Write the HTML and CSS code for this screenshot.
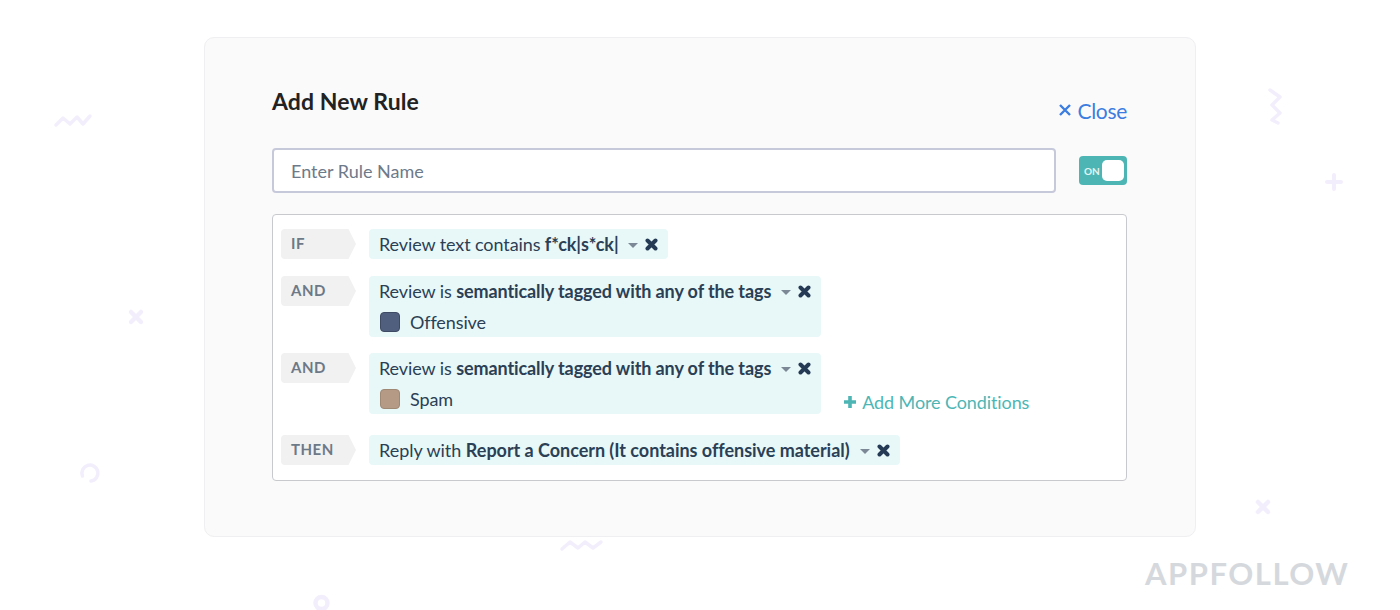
FILE: index.html
```html
<!DOCTYPE html>
<html lang="en">
<head>
    <meta charset="UTF-8">
    <title>Add New Rule</title>
    <link rel="stylesheet" href="styles.css">
</head>
<body>
    <svg class="deco" width="1400" height="610" viewBox="0 0 1400 610" fill="none">
        <g stroke="#f3eefc" stroke-width="3.500" stroke-linecap="round" stroke-linejoin="round">
            <path d="M56 125l7-7 7 6 7-7 6 7 7-8"/>
            <path d="M131 312l10 10M141 312l-10 10" stroke-width="4.500"/>
            <path d="M82.500 476a8 8 0 1 1 8.500 5"/>
            <path d="M562 549l8-7 8 6 7-6 8 6 8-6"/>
            <circle cx="321.500" cy="603" r="6" stroke-width="4.500"/>
            <path d="M1270 90l10 7-8 8 8 8-8 7 6 3"/>
            <path d="M1334 175v14M1327 182h14" stroke-width="4"/>
            <path d="M1258 502l10 10M1268 502l-10 10" stroke-width="4.500"/>
        </g>
    </svg>

    <div class="card">
        <div class="card-head">
            <h1>Add New Rule</h1>
            <a class="close">
                <svg width="12" height="12" viewBox="0 0 12 12"><path d="M1 1l10 10M11 1l-10 10" stroke="#3b7de0" stroke-width="2.400"/></svg>
                Close
            </a>
        </div>

        <div class="name-row">
            <input class="name-input" type="text" placeholder="Enter Rule Name">
            <div class="toggle">
                <span>ON</span>
                <i class="knob"></i>
            </div>
        </div>

        <div class="rules">
            <div class="rule">
                <div class="tag">IF</div>
                <div class="cond">
                    <div class="cond-line">
                        Review text contains&nbsp;<b>f*ck|s*ck|</b>
                        <i class="caret"></i>
                        <svg class="remove" width="13" height="13" viewBox="0 0 13 13"><path d="M2.500 2.500l8 8M10.500 2.500l-8 8" stroke="#253b55" stroke-width="4" stroke-linecap="round"/></svg>
                    </div>
                </div>
            </div>

            <div class="rule rule-and">
                <div class="tag">AND</div>
                <div class="cond">
                    <div class="cond-line">
                        Review is&nbsp;<b>semantically tagged with any of the tags</b>
                        <i class="caret"></i>
                        <svg class="remove" width="13" height="13" viewBox="0 0 13 13"><path d="M2.500 2.500l8 8M10.500 2.500l-8 8" stroke="#253b55" stroke-width="4" stroke-linecap="round"/></svg>
                    </div>
                    <div class="cond-tag"><i class="swatch swatch-navy"></i>Offensive</div>
                </div>
            </div>

            <div class="rule rule-spam">
                <div class="tag">AND</div>
                <div class="cond">
                    <div class="cond-line">
                        Review is&nbsp;<b>semantically tagged with any of the tags</b>
                        <i class="caret"></i>
                        <svg class="remove" width="13" height="13" viewBox="0 0 13 13"><path d="M2.500 2.500l8 8M10.500 2.500l-8 8" stroke="#253b55" stroke-width="4" stroke-linecap="round"/></svg>
                    </div>
                    <div class="cond-tag"><i class="swatch swatch-tan"></i>Spam</div>
                </div>
                <a class="add-more">
                    <svg width="14" height="14" viewBox="0 0 14 14"><path d="M7 1v12M1 7h12" stroke="#4db6b5" stroke-width="3.600"/></svg>
                    Add More Conditions
                </a>
            </div>

            <div class="rule rule-then">
                <div class="tag">THEN</div>
                <div class="cond">
                    <div class="cond-line">
                        Reply with&nbsp;<b>Report a Concern (It contains offensive material)</b>
                        <i class="caret"></i>
                        <svg class="remove" width="13" height="13" viewBox="0 0 13 13"><path d="M2.500 2.500l8 8M10.500 2.500l-8 8" stroke="#253b55" stroke-width="4" stroke-linecap="round"/></svg>
                    </div>
                </div>
            </div>
        </div>
    </div>

    <div class="watermark">APPFOLLOW</div>
</body>
</html>
```

FILE: styles.css
```css
body {
    font-family: Lato, 'Open Sans', sans-serif;
    background-color: #fff;
    color: #2b3f55;
    margin: 0;
    height: 610px;
    overflow: hidden;
    position: relative;
}

.deco {
    position: absolute;
    top: 0;
    left: 0;
}

.card {
    position: relative;
    box-sizing: border-box;
    width: 992px;
    height: 500px;
    margin: 37px 0 0 204px;
    padding: 0 68px 0 67px;
    background: #fafafb;
    border: 1px solid #efeff1;
    border-radius: 10px;
}

.card-head {
    display: flex;
    justify-content: space-between;
    height: 110px;
    padding-top: 49px;
    box-sizing: border-box;
}

h1 {
    margin: 0;
    font-size: 23px;
    line-height: 29px;
    font-weight: 700;
    letter-spacing: 0.1px;
    color: #222;
}

.close {
    display: flex;
    align-items: center;
    gap: 6px;
    height: 26px;
    margin-top: 10px;
    font-size: 21px;
    letter-spacing: -0.3px;
    color: #3b7de0;
}

.name-row {
    display: flex;
    justify-content: space-between;
    align-items: center;
}

.name-input {
    width: 784px;
    height: 45px;
    box-sizing: border-box;
    padding: 0 17px;
    font-family: inherit;
    font-size: 18px;
    background: #fff;
    border: 2px solid #c6c9da;
    border-radius: 4px;
}

.name-input::placeholder {
    color: #6d7a8a;
    opacity: 1;
}

.toggle {
    display: flex;
    align-items: center;
    justify-content: space-between;
    box-sizing: border-box;
    width: 48px;
    height: 29px;
    padding: 0 3px 0 5px;
    background: #4db6b5;
    border-radius: 4px;
    color: #e4f4f4;
    font-size: 10px;
    font-weight: 700;
}

.knob {
    width: 22px;
    height: 21px;
    background: #fff;
    border-radius: 5px;
}

.rules {
    box-sizing: border-box;
    height: 267px;
    margin-top: 21px;
    padding-top: 14px;
    padding-left: 8px;
    background: #fff;
    border: 1px solid #c8c9cd;
    border-radius: 4px;
}

.rule {
    display: flex;
    align-items: flex-start;
}

.rule-and {
    margin-top: 17px;
}

.rule-spam {
    margin-top: 16px;
}

.rule-then {
    margin-top: 21px;
}

.tag {
    position: relative;
    box-sizing: border-box;
    width: 65px;
    height: 30px;
    margin-right: 23px;
    padding-left: 10px;
    background: #f1f1f2;
    border-radius: 4px 0 0 4px;
    font-size: 15px;
    line-height: 29px;
    font-weight: 700;
    letter-spacing: 0.5px;
    color: #6d7987;
}

.tag::after {
    content: "";
    position: absolute;
    top: 0;
    left: 65px;
    width: 10px;
    height: 30px;
    background: #f1f1f2;
    clip-path: polygon(0 0, 25% 0, 100% 50%, 25% 100%, 0 100%);
}

.cond {
    padding: 0 10px;
    background: #e8f8f8;
    border-radius: 4px;
    font-size: 18px;
    letter-spacing: -0.1px;
}

.rule-then .cond {
    letter-spacing: -0.03px;
}

.cond-line {
    display: flex;
    align-items: center;
    height: 30px;
}

.cond-line b {
    font-weight: 700;
}

.caret {
    width: 0;
    height: 0;
    margin: 2px 7px 0 10px;
    border-left: 5px solid transparent;
    border-right: 5px solid transparent;
    border-top: 5px solid #7c8896;
}

.remove {
    flex: none;
}

.cond-tag {
    display: flex;
    align-items: center;
    height: 31px;
    padding-left: 1px;
}

.swatch {
    box-sizing: border-box;
    width: 20px;
    height: 20px;
    margin-right: 10px;
    border-radius: 4px;
}

.swatch-navy {
    background: #515f7f;
    border: 1px solid #3e4a63;
}

.swatch-tan {
    background: #b59b86;
    border: 1px solid #9f8874;
}

.add-more {
    display: flex;
    align-items: center;
    gap: 5px;
    margin: 38px 0 0 22px;
    font-size: 18px;
    letter-spacing: -0.1px;
    color: #4db6b5;
}

.watermark {
    position: absolute;
    left: 1145px;
    top: 554px;
    font-size: 31px;
    line-height: 38px;
    font-weight: 700;
    letter-spacing: 1.500px;
    color: #d5d9dd;
}
```
